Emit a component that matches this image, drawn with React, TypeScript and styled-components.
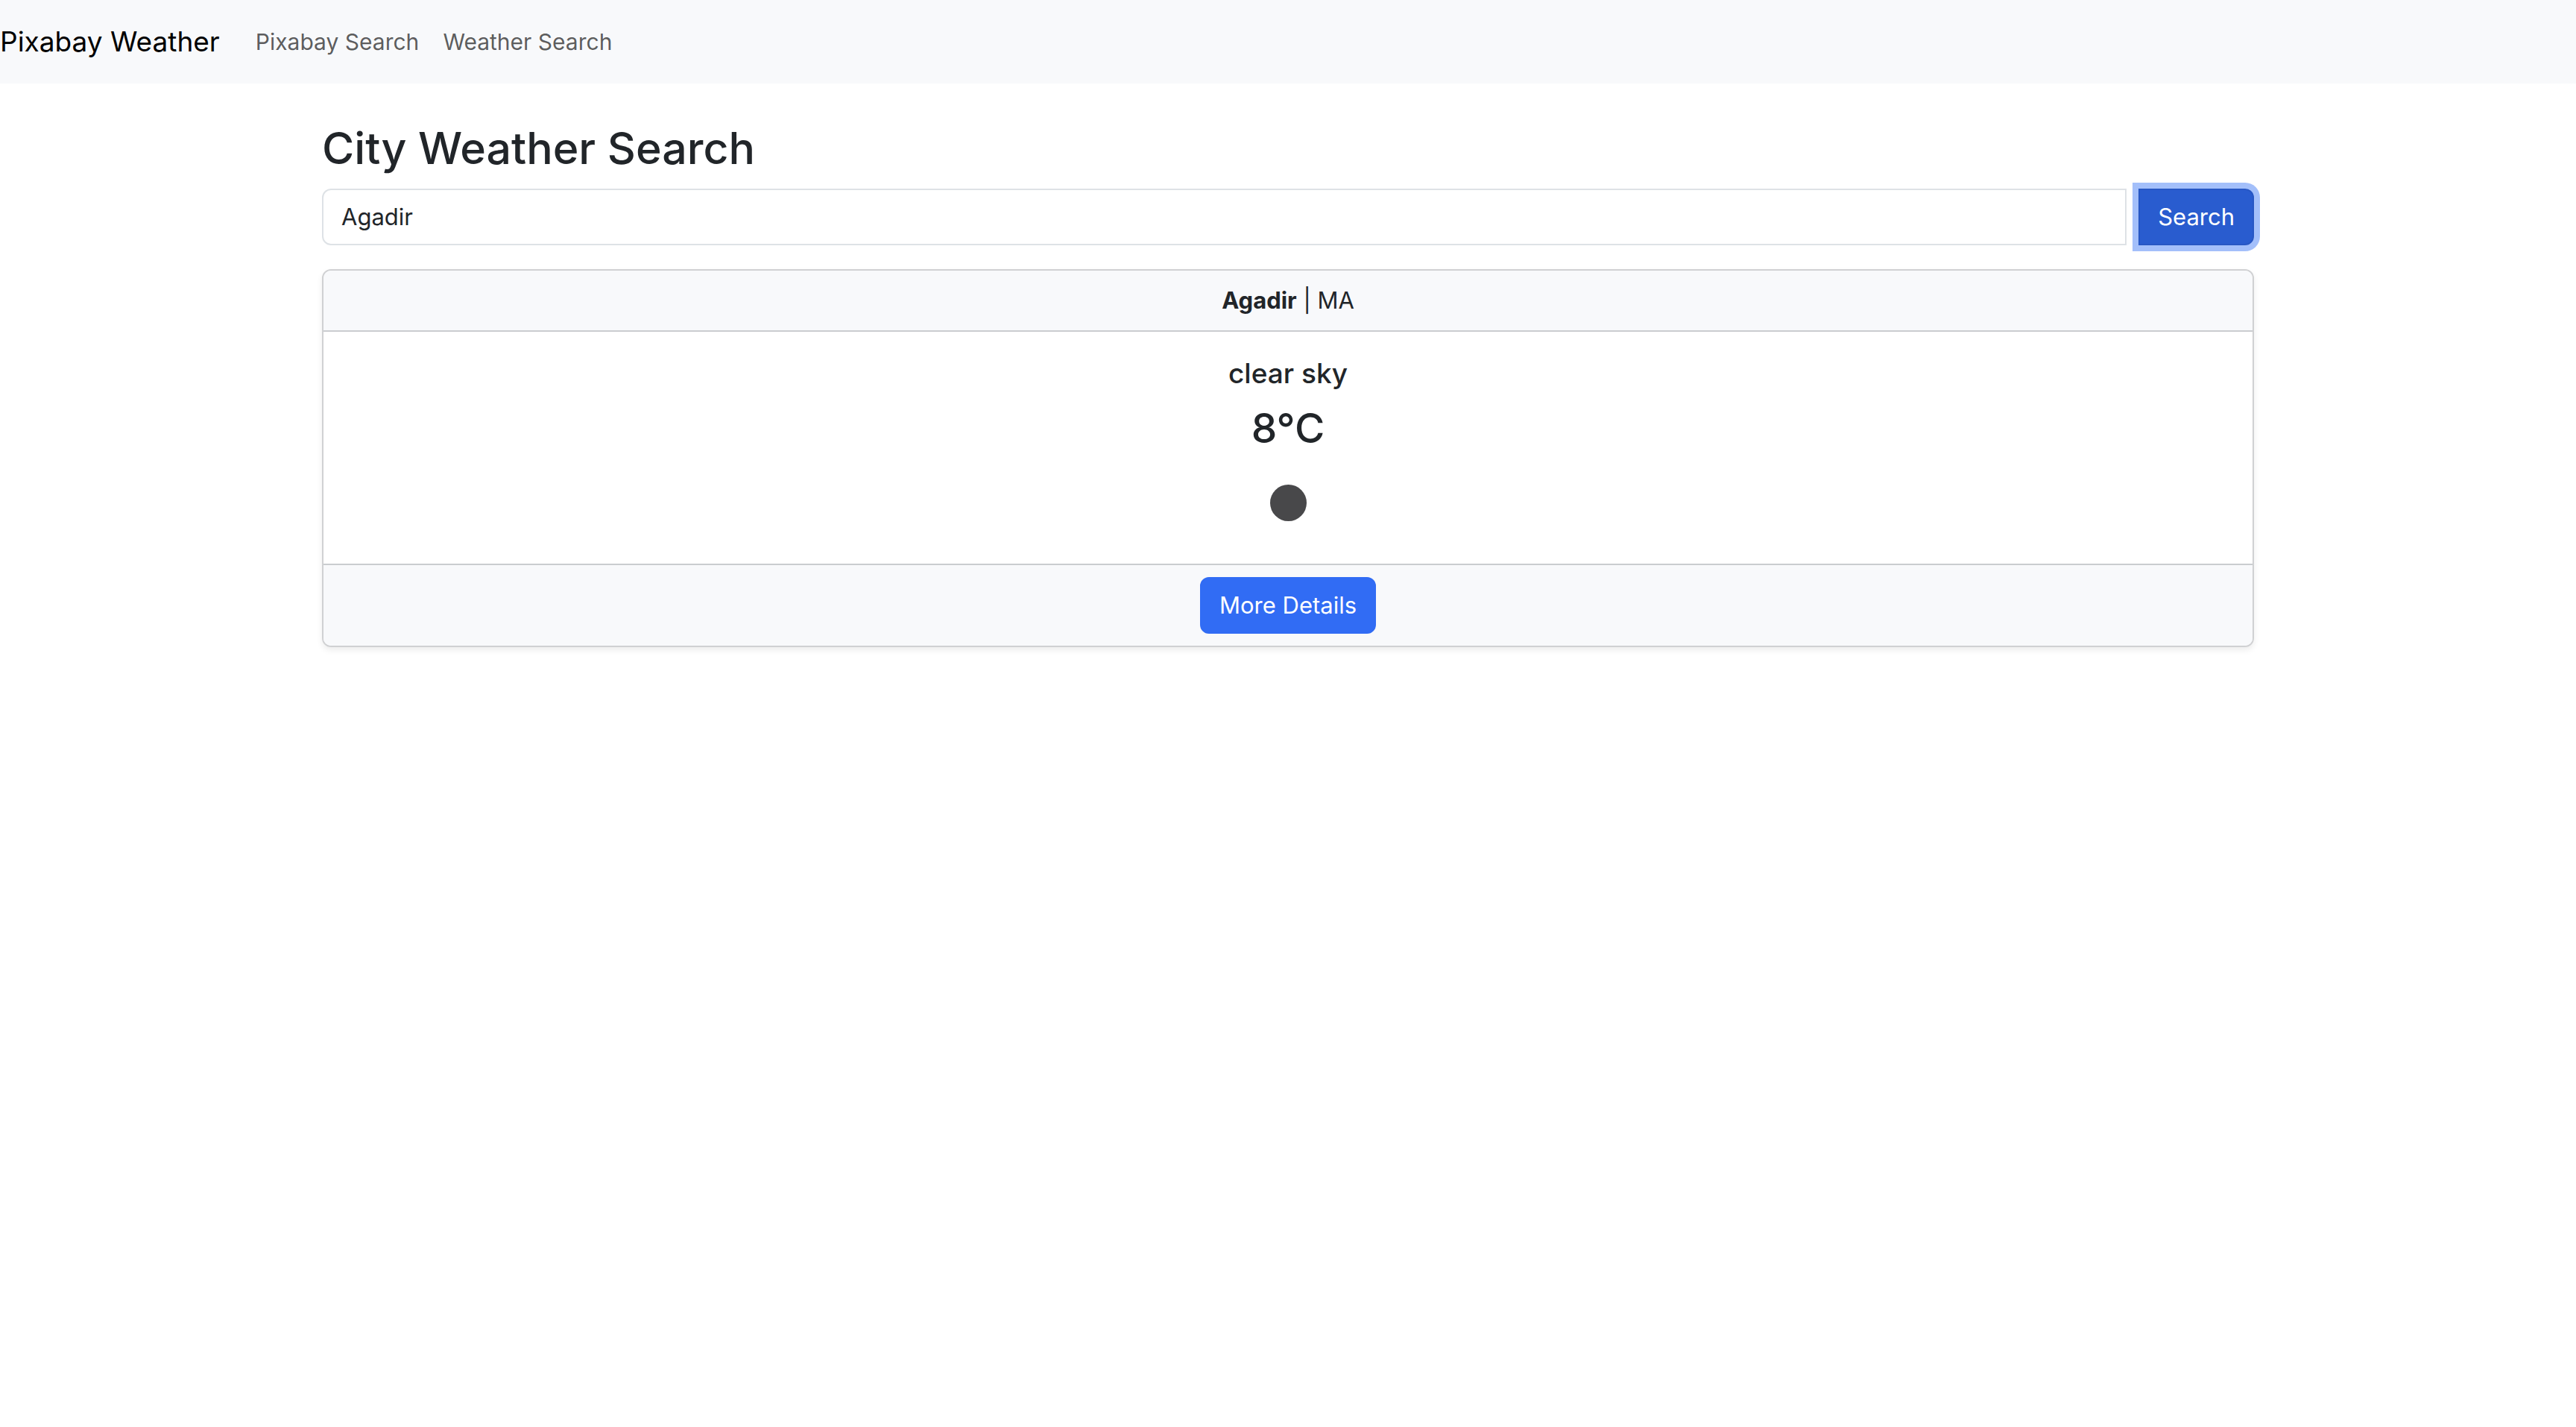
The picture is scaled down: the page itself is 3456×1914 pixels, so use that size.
import React, { useState } from 'react';
import styled, { createGlobalStyle } from 'styled-components';

const GlobalStyle = createGlobalStyle`
  *, *::before, *::after { box-sizing: border-box; }
  body {
    margin: 0;
    background: #fff;
    color: #212529;
    font-family: Inter, "Liberation Sans", sans-serif;
    font-size: 31px;
    line-height: 48px;
  }
  h1, h2, h3, p { margin: 0; font-weight: 500; }
`;

const Navbar = styled.nav`
  display: flex;
  align-items: center;
  padding: 16px 0;
  background: #f8f9fb;
`;

const Brand = styled.a`
  margin-right: 32px;
  color: #000;
  font-size: 37px;
  line-height: 60px;
  text-decoration: none;
  white-space: nowrap;
`;

const NavList = styled.ul`
  display: flex;
  margin: 0;
  padding: 0;
  list-style: none;
`;

const NavLink = styled.a`
  display: block;
  padding: 16px;
  color: rgba(0, 0, 0, 0.65);
  font-size: 30px;
  text-decoration: none;
  white-space: nowrap;
`;

const Container = styled.main`
  width: 100%;
  max-width: 2640px;
  margin: 0 auto;
  padding: 48px 24px;
`;

const Title = styled.h1`
  margin-bottom: 16px;
  font-size: 59px;
  line-height: 77px;
`;

const SearchForm = styled.form`
  display: flex;
  gap: 16px;
  margin-bottom: 32px;
`;

const CityInput = styled.input`
  flex: 1;
  min-width: 0;
  padding: 12px 24px;
  border: 2px solid #dee2e6;
  border-radius: 12px 0 0 12px;
  background: #fff;
  color: #212529;
  font-family: inherit;
  font-size: 31px;
  line-height: 48px;
  outline: none;
`;

const Button = styled.button<{ $active?: boolean }>`
  padding: 12px 24px;
  border: 2px solid ${(p) => (p.$active ? '#2757c4' : '#316cf4')};
  border-radius: ${(p) => (p.$active ? '0 12px 12px 0' : '12px')};
  background: ${(p) => (p.$active ? '#295ccf' : '#316cf4')};
  box-shadow: ${(p) => (p.$active ? '0 0 0 8px #a3bffa' : 'none')};
  color: #fff;
  font-family: inherit;
  font-size: 31px;
  line-height: 48px;
  cursor: pointer;
`;

const Card = styled.article`
  border: 2px solid #d0d1d3;
  border-radius: 12px;
  background: #fff;
  box-shadow: 0 4px 8px rgba(0, 0, 0, 0.075);
  text-align: center;
`;

const CardHeader = styled.header`
  padding: 16px 32px;
  border-bottom: 2px solid #cacccf;
  border-radius: 10px 10px 0 0;
  background: #f8f9fb;
`;

const CardBody = styled.div`
  display: flex;
  flex-direction: column;
  align-items: center;
  gap: 16px;
  padding: 32px;
`;

const Condition = styled.h3`
  font-size: 37px;
  line-height: 48px;
`;

const Temperature = styled.h2`
  font-size: 55px;
  line-height: 67px;
`;

const WeatherIcon = styled.svg`
  display: block;
  width: 100px;
  height: 100px;
`;

const CardFooter = styled.footer`
  display: flex;
  justify-content: center;
  padding: 16px 32px;
  border-top: 2px solid #cacccf;
  border-radius: 0 0 10px 10px;
  background: #f8f9fb;
`;

export default function App() {
  const [city, setCity] = useState('Agadir');

  return (
    <>
      <GlobalStyle />
      <Navbar>
        <Brand href="#">Pixabay Weather</Brand>
        <NavList>
          <li><NavLink href="#pixabay">Pixabay Search</NavLink></li>
          <li><NavLink href="#weather">Weather Search</NavLink></li>
        </NavList>
      </Navbar>
      <Container>
        <Title>City Weather Search</Title>
        <SearchForm onSubmit={(e) => e.preventDefault()}>
          <CityInput
            type="text"
            aria-label="City"
            value={city}
            onChange={(e) => setCity(e.target.value)}
          />
          <Button type="submit" $active>Search</Button>
        </SearchForm>
        <Card>
          <CardHeader><strong>Agadir</strong> | MA</CardHeader>
          <CardBody>
            <Condition>clear sky</Condition>
            <Temperature>8°C</Temperature>
            <WeatherIcon viewBox="0 0 100 100" role="img" aria-label="clear sky, night">
              <circle cx="50.5" cy="50.5" r="24.5" fill="#48484a" />
            </WeatherIcon>
          </CardBody>
          <CardFooter>
            <Button type="button">More Details</Button>
          </CardFooter>
        </Card>
      </Container>
    </>
  );
}
